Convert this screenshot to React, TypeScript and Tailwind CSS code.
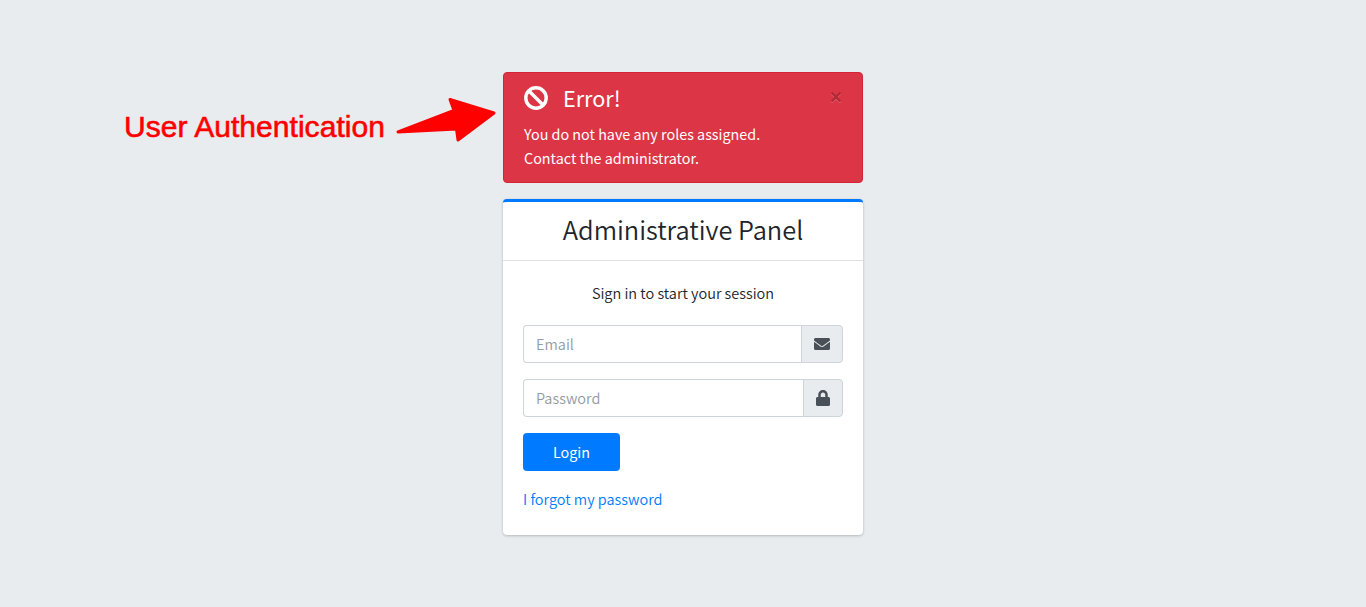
import type { ReactNode } from "react";
import { FaEnvelope, FaLock } from "react-icons/fa";

function Annotation() {
  return (
    <>
      <span className="absolute left-[124px] top-[109px] whitespace-nowrap font-['Liberation_Sans',Arial,sans-serif] text-[30px] leading-[36px] tracking-[0.04px] text-[#ff0000] [-webkit-text-stroke:0.6px_#ff0000]">
        User Authentication
      </span>
      <svg className="absolute left-[390px] top-[92px]" width="110" height="56" viewBox="390 92 110 56" aria-hidden="true">
        <path
          d="M398 132 L454 110.5 L450 99.5 L494 113 L458 140 L456.5 129 Z"
          fill="#ff0000"
          stroke="#ff0000"
          strokeWidth="3"
          strokeLinejoin="round"
        />
      </svg>
    </>
  );
}

function Field({ type, label, icon }: { type: string; label: string; icon: ReactNode }) {
  return (
    <div className="mb-4 flex h-[38px]">
      <input
        type={type}
        placeholder={label}
        className="min-w-0 flex-1 rounded-l border border-r-0 border-[#ced4da] bg-white px-3 text-[14.5px] outline-none placeholder:text-[#939ba2]"
      />
      <span className="flex items-center rounded-r border border-[#ced4da] bg-[#e9ecef] px-3 text-[#495057]">
        {icon}
      </span>
    </div>
  );
}

export default function App() {
  return (
    <main className="relative flex h-[607px] justify-center overflow-hidden bg-[#e9ecef] pt-[72px] font-['Noto_Sans_CJK_SC',sans-serif] text-[14.5px] font-[350] leading-6 text-[#212529]">
      <Annotation />
      <div className="w-[360px]">
        <section className="mb-4 h-[111px] rounded border border-[#d32535] bg-[#dc3545] px-5 pt-[11px] text-white">
          <div className="flex h-7 items-center">
            <svg width="24" height="24" viewBox="0 0 24 24" fill="none" stroke="currentColor" strokeWidth="3.4" className="mr-[15px]" aria-hidden="true">
              <circle cx="12" cy="12" r="10.2" />
              <path d="M5 5l14 14" />
            </svg>
            <h5 className="text-[21.6px] font-normal leading-7">Error!</h5>
            <button aria-label="Close" className="ml-auto flex h-6 items-center pb-0.5">
              <svg width="12" height="12" viewBox="0 0 12 12" aria-hidden="true">
                <path d="M1.5 2.5l9 9M10.5 2.5l-9 9" stroke="#e35d6a" strokeWidth="2.3" />
                <path d="M1.5 1.5l9 9M10.5 1.5l-9 9" stroke="#b02a37" strokeWidth="2.3" />
              </svg>
            </button>
          </div>
          <p className="mt-[10px] text-[14.35px] font-normal">
            You do not have any roles assigned.
            <br />
            Contact the administrator.
          </p>
        </section>

        <section className="h-[336px] rounded border-t-[3px] border-[#007bff] bg-white shadow-[0_0_1px_rgba(0,0,0,0.125),0_1px_3px_rgba(0,0,0,0.2)]">
          <h1 className="flex h-[59px] items-center justify-center border-b border-[#dfdfdf] pb-1 text-[25.4px]">
            Administrative Panel
          </h1>
          <form className="px-5 pt-5">
            <p className="mb-5 text-center">Sign in to start your session</p>
            <Field type="email" label="Email" icon={<FaEnvelope size={16} />} />
            <Field type="password" label="Password" icon={<FaLock className="h-4 w-3.5" />} />
            <button type="button" className="flex h-[38px] w-[97px] items-center justify-center rounded bg-[#007bff] text-[14.35px] font-normal text-white">
              Login
            </button>
            <p className="mt-4">
              <a className="text-[#007bff]" href="#">I forgot my password</a>
            </p>
          </form>
        </section>
      </div>
    </main>
  );
}
